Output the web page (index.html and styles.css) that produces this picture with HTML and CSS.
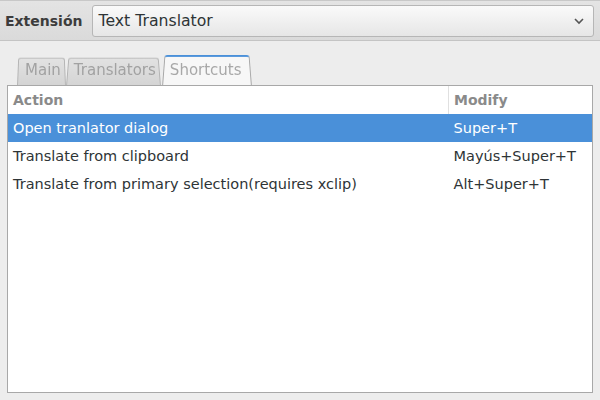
FILE: index.html
```html
<!DOCTYPE html>
<html lang="es">
<head>
<meta charset="UTF-8">
<title>Text Translator - Preferencias</title>
<link rel="stylesheet" href="styles.css">
</head>
<body>
<div class="toolbar">
  <span class="toolbar-label">Extensión</span>
  <div class="combo">
    <span>Text Translator</span>
    <svg class="combo-arrow" width="12" height="8" viewBox="0 0 12 8">
      <path d="M2 2 L6 6 L10 2" fill="none" stroke="#555" stroke-width="1.6"/>
    </svg>
  </div>
</div>

<div class="notebook">
  <div class="tabs">
    <div class="tab">Main</div>
    <div class="tab">Translators</div>
    <div class="tab active">Shortcuts</div>
  </div>

  <div class="panel">
    <table class="shortcuts">
      <thead>
        <tr>
          <th class="col-action">Action</th>
          <th class="col-modify">Modify</th>
        </tr>
      </thead>
      <tbody>
        <tr class="selected">
          <td>Open tranlator dialog</td>
          <td>Super+T</td>
        </tr>
        <tr>
          <td>Translate from clipboard</td>
          <td>Mayús+Super+T</td>
        </tr>
        <tr>
          <td>Translate from primary selection(requires xclip)</td>
          <td>Alt+Super+T</td>
        </tr>
      </tbody>
    </table>
  </div>
</div>
</body>
</html>
```

FILE: styles.css
```css
html, body {
  height: 100%;
}
body {
  font-family: "DejaVu Sans", sans-serif;
  font-size: 14.5px;
  margin: 0;
  background: #ededed;
  color: #2e3436;
  display: flex;
  flex-direction: column;
}

/* top bar with the extension picker */
.toolbar {
  display: flex;
  align-items: center;
  gap: 10px;
  height: 41px;
  box-sizing: border-box;
  padding: 3px 6px 3px 5px;
  background: linear-gradient(#e4e4e4, #dadada);
  border-top: 1px solid #c8c8c8;
  border-bottom: 1px solid #c4c4c4;
}
.toolbar-label {
  font-weight: bold;
  color: #3c3c3c;
  font-size: 14px;
}
.combo {
  flex: 1;
  display: flex;
  align-items: center;
  justify-content: space-between;
  height: 32px;
  box-sizing: border-box;
  padding: 0 8px 0 5px;
  border: 1px solid #b6b6b6;
  border-radius: 3px;
  background: linear-gradient(#fafafa, #e6e6e6);
  color: #2e3436;
  font-size: 15.7px;
}

/* notebook */
.notebook {
  flex: 1;
  display: flex;
  flex-direction: column;
  padding: 11px 7px 7px 7px;
}
.tabs {
  display: flex;
  align-items: flex-end;
  padding-left: 10px;
  height: 33px;
}
.tab {
  position: relative;
  z-index: 0;
  height: 29px;
  line-height: 29px;
  padding: 0 5px 0 8px;
  color: #a2a2a2;
  font-size: 15px;
}
.tab::before {
  content: "";
  position: absolute;
  z-index: -1;
  left: 0; right: 0; top: 0; bottom: -1px;
  border: 1px solid #b4b4b4;
  border-bottom: none;
  border-radius: 3px 3px 0 0;
  background: linear-gradient(#e2e2e2, #d4d4d4);
  transform: perspective(60px) rotateX(6deg);
  transform-origin: bottom;
}
.tab.active {
  height: 32px;
  line-height: 34px;
  padding: 0 10px 0 8px;
  margin-left: 1px;
  color: #a8a8a8;
  z-index: 1;
}
.tab.active::before {
  background: #f7f7f7;
  border-top: 2px solid #4a90d9;
  border-color: #4a90d9 #a8a8a8 #a8a8a8 #a8a8a8;
  bottom: -2px;
}

.panel {
  flex: 1;
  position: relative;
  z-index: 2;
  background: #fff;
  border: 1px solid #a8a8a8;
}

/* shortcut list */
.shortcuts {
  width: 100%;
  border-collapse: collapse;
}
.shortcuts th {
  text-align: left;
  font-weight: bold;
  font-size: 14px;
  color: #8a8a8a;
  height: 28px;
  padding: 0 5px;
}
.shortcuts th.col-action {
  border-right: 1px solid #e0e0e0;
}
.shortcuts th.col-modify {
  width: 133px;
}
.shortcuts td {
  height: 28px;
  padding: 0 5px;
  white-space: nowrap;
}
.shortcuts tr.selected td {
  background: #4a90d9;
  color: #fff;
}
```
